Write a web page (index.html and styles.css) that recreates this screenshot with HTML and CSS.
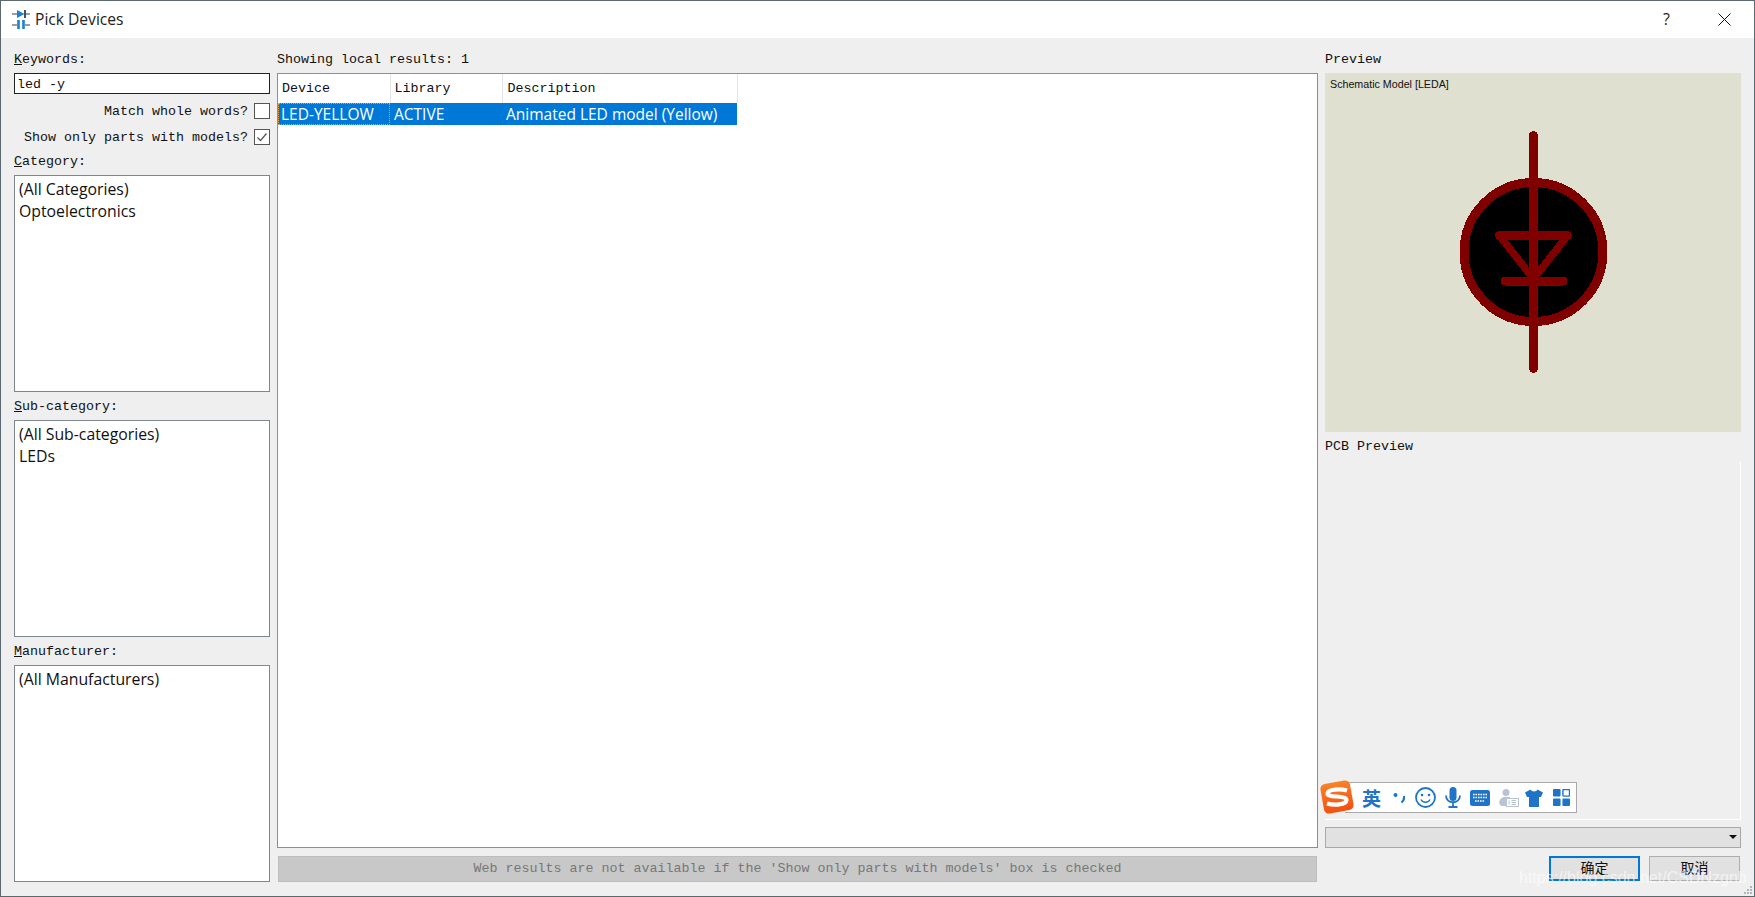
FILE: index.html
```html
<!DOCTYPE html>
<html lang="en">
<head>
<meta charset="utf-8">
<title>Pick Devices</title>
<link rel="stylesheet" href="styles.css">
</head>
<body>
<div class="window">
  <header class="titlebar">
    <svg class="app-icon" width="18" height="21" viewBox="0 0 18 21">
      <path d="M0 5H5M13 5H18M0 16H5M13 16H18" stroke="#33424f" stroke-width="1.200" fill="none"/>
      <path d="M5 1L12.500 5L5 9Z" fill="#1f7fd0"/>
      <path d="M13 1V9" stroke="#33424f" stroke-width="1.800"/>
      <path d="M6.500 11V20M11.500 11V20" stroke="#1f7fd0" stroke-width="2.600"/>
    </svg>
    <span class="title">Pick Devices</span>
    <span class="help">?</span>
    <svg class="close" width="13" height="13" viewBox="0 0 13 13"><path d="M.5.500L12.500 12.500M12.500.500L.5 12.500" stroke="#111" stroke-width="1" fill="none"/></svg>
  </header>
  <main class="body">
    <section class="col-left">
      <label class="lbl"><u>K</u>eywords:</label>
      <div class="input">led -y</div>
      <div class="check-row"><span class="lbl check-lbl">Match whole words?</span><span class="check"></span></div>
      <div class="check-row second"><span class="lbl check-lbl">Show only parts with models?</span>
        <span class="check"><svg width="14" height="14" viewBox="0 0 14 14"><path d="M2.500 7.500L5.500 10.500L11.500 3.500" stroke="#555" stroke-width="1.200" fill="none"/></svg></span></div>
      <label class="lbl group-lbl"><u>C</u>ategory:</label>
      <div class="listbox"><div>(All Categories)</div><div>Optoelectronics</div></div>
      <label class="lbl group-lbl"><u>S</u>ub-category:</label>
      <div class="listbox"><div>(All Sub-categories)</div><div>LEDs</div></div>
      <label class="lbl group-lbl"><u>M</u>anufacturer:</label>
      <div class="listbox"><div>(All Manufacturers)</div></div>
    </section>

    <section class="col-center">
      <div class="lbl">Showing local results: 1</div>
      <div class="results">
        <table class="grid">
          <thead><tr><th class="c1">Device</th><th class="c2">Library</th><th class="c3">Description</th></tr></thead>
          <tbody><tr><td class="c1"><span class="focus">LED-YELLOW</span></td><td class="c2">ACTIVE</td><td class="c3">Animated LED model (Yellow)</td></tr></tbody>
        </table>
      </div>
      <div class="webbar">Web results are not available if the 'Show only parts with models' box is checked</div>
    </section>

    <section class="col-right">
      <div class="lbl">Preview</div>
      <div class="model">
        <span class="model-name">Schematic Model [LEDA]</span>
        <svg class="model-svg" width="416" height="359" viewBox="0 0 416 359">
          <circle cx="208.500" cy="179" r="69.500" fill="#000" stroke="#800000" stroke-width="9"/>
          <g stroke="#800000" stroke-linecap="round" stroke-linejoin="round" fill="none">
            <path stroke-width="9" d="M208.500 62.500V295.500"/>
            <path stroke-width="9" d="M180 208H238"/>
            <path stroke-width="9" d="M174.500 162.500H242.500"/>
            <path stroke-width="7.500" d="M174.500 162.500L208.500 206L242.500 162.500"/>
          </g>
        </svg>
      </div>
      <div class="lbl pcb-lbl">PCB Preview</div>
      <div class="pcb">
        <div class="ime">
          <svg class="ime-logo" width="37" height="36" viewBox="0 0 37 36">
            <defs><linearGradient id="logo-fill" x1="0" y1="0" x2="0" y2="1"><stop offset="0" stop-color="#f9822a"/><stop offset="1" stop-color="#f2500f"/></linearGradient></defs>
            <rect x="3" y="3" width="30" height="30" rx="5" fill="url(#logo-fill)" transform="rotate(-10 18 18)"/>
            <path d="M28 11.500C21 9.500 9 10 8.500 14.500C8 19 27.500 16 27.500 21C27 26 15 26.500 8 24.500" stroke="#fff" stroke-width="4.200" fill="none"/>
          </svg>
          <span class="ime-en">英</span>
          <svg class="ime-icon punct" width="12" height="18" viewBox="0 0 12 18"><circle cx="2.500" cy="6" r="2" fill="#1f74c8"/><path d="M11 7C11.500 10 10.500 12 8.500 13.500" stroke="#1f74c8" stroke-width="2.200" fill="none"/></svg>
          <svg class="ime-icon smile" width="21" height="21" viewBox="0 0 21 21"><circle cx="10.500" cy="10.500" r="9.500" fill="none" stroke="#1f74c8" stroke-width="1.800"/><circle cx="7" cy="8" r="1.300" fill="#1f74c8"/><circle cx="14" cy="8" r="1.300" fill="#1f74c8"/><path d="M6 12.500C7.500 16 13.500 16 15 12.500" stroke="#1f74c8" stroke-width="1.500" fill="none"/></svg>
          <svg class="ime-icon" width="16" height="21" viewBox="0 0 16 21"><rect x="4.500" y="0" width="7" height="14" rx="3.500" fill="#1f74c8"/><path d="M1 8.500C1 17.500 15 17.500 15 8.500M8 15.500V19.500M3.500 20H12.500" stroke="#1f74c8" stroke-width="1.800" fill="none"/></svg>
          <svg class="ime-icon" width="20" height="16" viewBox="0 0 20 16"><rect x="0" y="0" width="20" height="16" rx="2.500" fill="#1f74c8"/><path d="M3 4.500H17M3 7.500H17M5 11H15" stroke="#fff" stroke-width="1.500" stroke-dasharray="1.600 .9" fill="none"/></svg>
          <svg class="ime-icon" width="20" height="20" viewBox="0 0 20 20"><circle cx="7" cy="4.500" r="3.500" fill="#b8c4d6"/><path d="M0 15C1 9 5 9 7 9H11V11H7V18H2Z" fill="#b8c4d6"/><rect x="7.500" y="10.500" width="12" height="8" fill="#fff" stroke="#b8c4d6"/><path d="M10 12.500V16.500M12.500 12.500H17M12.500 14.500H17M12.500 16.500H17" stroke="#b8c4d6" fill="none"/></svg>
          <svg class="ime-icon shirt" width="18" height="18" viewBox="0 0 18 18"><path d="M5.500 .5L0 3.500L2 8H4V18H14V8H16L18 3.500L12.500 .5C11.500 3 6.500 3 5.500 .5Z" fill="#1f74c8"/></svg>
          <svg class="ime-icon apps" width="17" height="17" viewBox="0 0 18 18"><rect x="0" y="0" width="8" height="8" rx="1" fill="#1f74c8"/><rect x="10.500" y=".5" width="7" height="7" rx="1" fill="#fff" stroke="#1f74c8" stroke-width="1.500"/><rect x="0" y="10" width="8" height="8" rx="1" fill="#1f74c8"/><rect x="10" y="10" width="8" height="8" rx="1" fill="#1f74c8"/></svg>
        </div>
      </div>
      <div class="combo"><span class="caret"></span></div>
      <div class="buttons">
        <button class="btn primary">确定</button>
        <button class="btn">取消</button>
      </div>
    </section>
  </main>
  <div class="watermark">https://blog.csdn.net/CSDNzgnb</div>
  <svg class="grip" width="10" height="10" viewBox="0 0 10 10"><path d="M7 1h2v2H7zM4 4h2v2H4zM7 4h2v2H7zM1 7h2v2H1zM4 7h2v2H4zM7 7h2v2H7z" fill="#b5b5b5"/></svg>
</div>
</body>
</html>
```

FILE: styles.css
```css
* { box-sizing: border-box; }
html, body { margin: 0; padding: 0; }
body { width: 1755px; height: 897px; overflow: hidden; background: #5b6871; }

.window {
  position: relative;
  width: 1755px;
  height: 897px;
  overflow: hidden;
  border: 1px solid #5b6871;
  background: #efefef;
  display: flex;
  flex-direction: column;
  color: #111;
}

.titlebar {
  height: 37px;
  flex: none;
  background: #fff;
  display: flex;
  align-items: center;
  padding-left: 11px;
  font-family: "Open Sans", "Noto Sans", sans-serif;
}
.app-icon { flex: none; }
.title { margin-left: 5px; margin-bottom: 2px; font-size: 15.6px; color: #222; }
.help { margin-left: auto; margin-bottom: 2px; font-size: 16px; color: #222; }
.close { margin-left: 48px; margin-right: 23px; }

.body {
  flex: 1;
  display: grid;
  grid-template-columns: 256px 1041px 416px;
  column-gap: 7px;
  padding: 0 13px;
  min-height: 0;
}

.lbl {
  font-family: "Liberation Mono", "DejaVu Sans Mono", monospace;
  font-size: 13.33px;
  line-height: 15px;
  color: #111;
  white-space: pre;
}
.check-lbl { position: relative; top: 1px; }

.col-left, .col-center, .col-right { padding-top: 14px; display: flex; flex-direction: column; min-width: 0; }

.input {
  margin-top: 6px;
  height: 21px;
  border: 1px solid #222;
  background: #fff;
  padding: 1px 0 0 2px;
  font-family: "Liberation Mono", monospace;
  font-size: 13.33px;
  line-height: 19px;
  width: 256px;
}
.check-row {
  margin-top: 8px;
  height: 17px;
  display: flex;
  justify-content: flex-end;
  align-items: center;
  gap: 6px;
}
.check-row.second { margin-top: 9px; }
.check {
  width: 16px;
  height: 16px;
  border: 1px solid #555;
  background: #fff;
  display: flex;
  align-items: center;
  justify-content: center;
  flex: none;
}
.check svg { display: block; }
.check-row + .group-lbl { margin-top: 9px; }

.group-lbl { margin-top: 7px; display: block; height: 15px; }
.listbox {
  margin-top: 6px;
  height: 217px;
  border: 1px solid #7f8690;
  background: #fff;
  padding: 2px 4px;
  font-family: "Open Sans", "Noto Sans", sans-serif;
  font-size: 15.8px;
  line-height: 22px;
  color: #111;
}

.results {
  margin-top: 6px;
  height: 775px;
  border: 1px solid #8a8f96;
  background: #fff;
}
.grid {
  border-collapse: collapse;
  table-layout: fixed;
  width: 459px;
}
.grid th {
  height: 29px;
  padding: 0 0 0 4px;
  text-align: left;
  font-family: "Liberation Mono", monospace;
  font-size: 13.33px;
  font-weight: normal;
  border-right: 1px solid #e4e4e4;
  color: #111;
}
.grid th.c3 { padding-left: 5px; }
.grid .c1 { width: 112px; }
.grid .c2 { width: 112px; }
.grid .c3 { width: 235px; }
.grid td {
  height: 22px;
  padding: 0 0 0 4px;
  background: #0078d7;
  color: #fff;
  font-family: "Open Sans", "Noto Sans", sans-serif;
  font-size: 15.5px;
  white-space: nowrap;
}
.grid td.c1 { padding: 0; }
.focus {
  display: block;
  height: 22px;
  line-height: 20px;
  padding-left: 2px;
  border: 1px dotted #f0a040;
}

.webbar {
  margin-top: 8px;
  margin-left: 1px;
  width: 1039px;
  height: 26px;
  background: #c8c8c8;
  border: 1px solid #bdbdbd;
  color: #777;
  font-family: "Liberation Mono", monospace;
  font-size: 13.33px;
  line-height: 24px;
  text-align: center;
  white-space: pre;
}

.model {
  position: relative;
  margin-top: 6px;
  width: 416px;
  height: 359px;
  background: #e0e0d0;
  flex: none;
}
.model-svg { display: block; shape-rendering: crispEdges; }
.model-name {
  position: absolute;
  left: 5px;
  top: 5px;
  font-family: "Liberation Sans", Arial, sans-serif;
  font-size: 10.7px;
  color: #111;
}
.pcb-lbl { margin-top: 7px; }
.pcb {
  margin-top: 7px;
  width: 416px;
  height: 359px;
  flex: none;
  border-right: 1px solid #fff;
  border-bottom: 1px solid #fff;
  display: flex;
  align-items: flex-end;
  padding-bottom: 6px;
}
.ime {
  position: relative;
  margin-left: 20px;
  width: 232px;
  height: 31px;
  background: #fff;
  border: 1px solid #a9a9a9;
  border-left: none;
  display: flex;
  align-items: center;
  padding-left: 17px;
}
.ime-logo { position: absolute; left: -26px; top: -4px; }
.ime-en { font-family: "Noto Sans CJK SC", sans-serif; font-weight: 700; font-size: 19px; color: #1f74c8; line-height: 20px; }
.ime-icon { flex: none; margin-left: 9px; display: block; }
.ime-icon.punct { margin-left: 12px; }
.ime-icon.smile { margin-left: 10px; }
.ime-icon.shirt { margin-left: 6px; }
.ime-icon.apps { margin-left: 10px; }

.combo {
  position: relative;
  margin-top: 7px;
  width: 416px;
  height: 21px;
  border: 1px solid #a9a9a9;
  background: #e1e1e1;
  flex: none;
}
.caret {
  position: absolute;
  right: 3px;
  top: 7px;
  width: 0;
  height: 0;
  border-left: 4px solid transparent;
  border-right: 4px solid transparent;
  border-top: 4px solid #111;
}

.buttons {
  margin-top: 8px;
  display: flex;
  justify-content: flex-end;
  gap: 9px;
  padding-right: 1px;
}
.btn {
  width: 91px;
  height: 25px;
  background: #e1e1e1;
  border: 1px solid #adadad;
  font-family: "Noto Sans CJK SC", sans-serif;
  font-size: 14px;
  color: #111;
  padding: 0 0 2px;
  line-height: 19px;
}
.btn.primary { border: 2px solid #0078d7; }

.watermark {
  position: absolute;
  left: 1518px;
  top: 868px;
  font-family: "Liberation Sans", Arial, sans-serif;
  font-size: 16px;
  color: rgba(255,255,255,.62);
  white-space: nowrap;
}
.grip { position: absolute; right: 1px; bottom: 1px; }
```
